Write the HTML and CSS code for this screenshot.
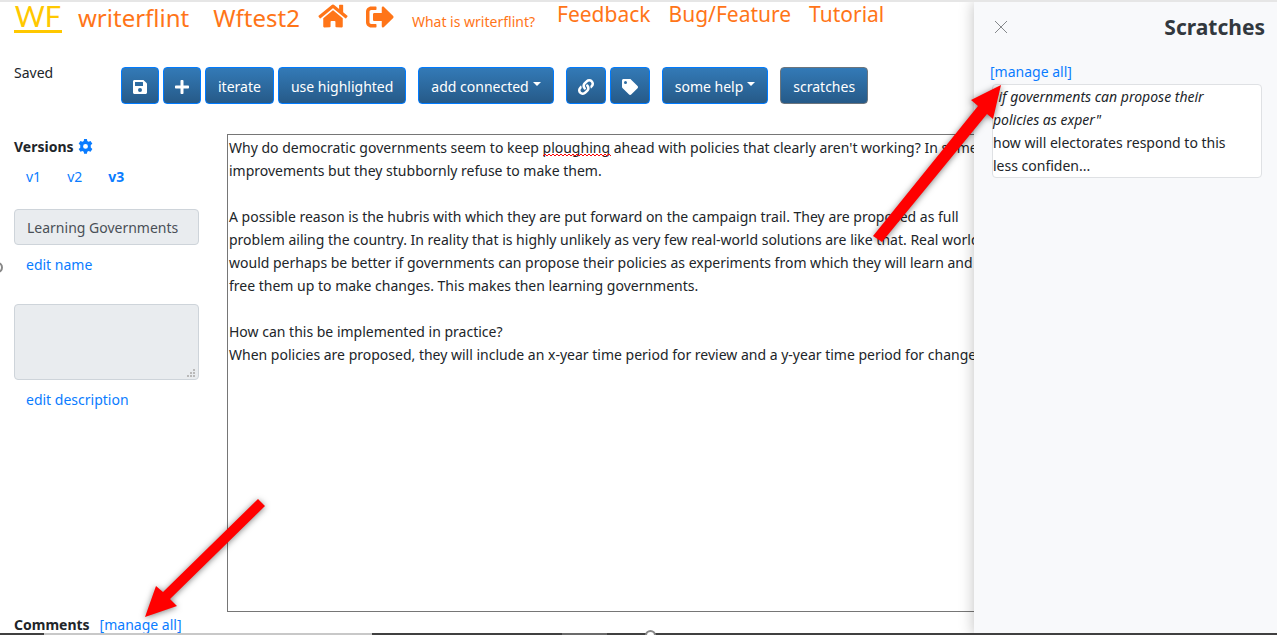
FILE: index.html
```html
<!DOCTYPE html>
<html lang="en">
<head>
<meta charset="utf-8">
<title>writerflint</title>
<link rel="stylesheet" href="styles.css">
</head>
<body>
<header class="site-header">
  <a class="logo" href="#">WF</a>
  <a class="brand" href="#">writerflint</a>
  <a class="brand project" href="#">Wftest2</a>
  <a class="nav-icon" href="#" aria-label="Home"><svg width="30" height="26" viewBox="0 0 576 512"><path d="M280 148L96 300v164c0 9 7 16 16 16l112-1c9 0 16-7 16-16v-95c0-9 7-16 16-16h64c9 0 16 7 16 16v95c0 9 7 16 16 16l112 1c9 0 16-7 16-16V300L296 148c-5-4-11-4-16 0zM572 251l-84-69V44c0-7-5-12-12-12h-56c-7 0-12 5-12 12v73l-90-74c-18-15-43-15-61 0L4 251c-5 4-6 12-1 17l25 31c4 5 12 6 17 1L280 107c5-4 11-4 15 0l235 193c5 5 13 4 17-1l26-31c4-5 4-13-1-17z"/></svg></a>
  <a class="nav-icon" href="#" aria-label="Sign out"><svg width="28" height="28" viewBox="0 0 512 512"><path d="M497 273L329 441c-15 15-41 4-41-17v-96H152c-13 0-24-11-24-24v-96c0-13 11-24 24-24h136V88c0-21 26-32 41-17l168 168c9 9 9 25 0 34zM192 436v-40c0-7-5-12-12-12H96c-18 0-32-14-32-32V160c0-18 14-32 32-32h84c7 0 12-5 12-12V76c0-7-5-12-12-12H96c-53 0-96 43-96 96v192c0 53 43 96 96 96h84c7 0 12-5 12-12z"/></svg></a>
  <a class="what" href="#">What is writerflint?</a>
  <nav class="links">
    <a href="#">Feedback</a>
    <a href="#">Bug/Feature</a>
    <a href="#">Tutorial</a>
  </nav>
</header>

<div class="toolbar">
  <span class="status">Saved</span>
  <div class="group">
    <button class="btn icon" aria-label="Save"><svg width="14" height="16" viewBox="0 0 448 512"><path d="M434 130l-84-84c-9-9-21-14-34-14H48C21 32 0 53 0 80v352c0 27 21 48 48 48h352c27 0 48-21 48-48V164c0-13-5-25-14-34zM224 416a64 64 0 1 1 0-128 64 64 0 0 1 0 128zm96-305v101c0 7-5 12-12 12H76c-7 0-12-5-12-12V108c0-7 5-12 12-12h229c9 3 15 9 15 15z"/></svg></button>
    <button class="btn icon" aria-label="Add"><svg width="14" height="16" viewBox="0 0 448 512"><path d="M416 208H272V64c0-18-14-32-32-32h-32c-18 0-32 14-32 32v144H32c-18 0-32 14-32 32v32c0 18 14 32 32 32h144v144c0 18 14 32 32 32h32c18 0 32-14 32-32V304h144c18 0 32-14 32-32v-32c0-18-14-32-32-32z"/></svg></button>
    <button class="btn">iterate</button>
    <button class="btn">use highlighted</button>
  </div>
  <button class="btn caret">add connected</button>
  <div class="group">
    <button class="btn icon" aria-label="Link"><svg width="16" height="16" viewBox="0 0 512 512"><path d="M326.600 185.400c59.700 59.800 58.900 155.700.4 214.600l-67.600 67.600c-59.300 59.300-155.700 59.300-215 0s-59.300-155.700 0-215l37.100-37.100c9.800-9.800 26.800-3.300 27.300 10.600.6 17.700 3.800 35.500 9.700 52.700 2 5.800.6 12.300-3.800 16.600l-13.100 13.100c-28 28-28.900 73.700-1.200 102 28 28.600 74.100 28.700 102.300.5l67.300-67.300c28.200-28.200 28.100-73.800 0-101.800-3.700-3.700-7.400-6.600-10.300-8.600a16 16 0 0 1-6.900-12.600c-.4-10.600 3.300-21.500 11.700-29.800l21.100-21.100c5.500-5.500 14.200-6.200 20.600-1.700a152 152 0 0 1 20.500 17.200zM467.500 44.400c-59.300-59.300-155.700-59.300-215 0l-67.500 67.600c-58.500 58.900-59.300 154.800.4 214.600a152 152 0 0 0 20.500 17.200c6.400 4.500 15.100 3.800 20.600-1.700l21.100-21.100c8.400-8.300 12.100-19.200 11.700-29.800a16 16 0 0 0-6.900-12.600c-2.900-2-6.600-4.900-10.300-8.600-28.100-28.100-28.200-73.600 0-101.800l67.200-67.300c28.200-28.200 74.300-28.100 102.300.5 27.800 28.300 26.900 73.900-1.100 102l-13.200 13.100c-4.400 4.400-5.800 10.800-3.800 16.600 5.900 17.200 9 35 9.700 52.700.5 13.900 17.500 20.400 27.300 10.600l37.100-37.100c59.300-59.300 59.300-155.700 0-215z"/></svg></button>
    <button class="btn icon" aria-label="Tag"><svg width="16" height="16" viewBox="0 0 512 512"><path d="M0 252V48C0 21 21 0 48 0h204c13 0 25 5 34 14l212 212c19 19 19 49 0 68L294 498c-19 19-49 19-68 0L14 286c-9-9-14-21-14-34zM112 64a48 48 0 1 0 0 96 48 48 0 0 0 0-96z"/></svg></button>
  </div>
  <button class="btn caret">some help</button>
  <button class="btn secondary">scratches</button>
</div>

<main class="workspace">
  <aside class="sidebar">
    <h2 class="heading">Versions <a href="#" aria-label="Version settings"><svg width="15" height="15" viewBox="0 0 16 16"><path fill-rule="evenodd" d="M6.500 0h3l.4 2.200 1.300.7 2.200-.8 1.900 2.900-1.700 1.500v2.600l1.700 1.500-1.900 2.900-2.200-.8-1.300.8-.4 2.200h-3l-.4-2.200-1.300-.8-2.200.8L.7 10.700l1.700-1.500V6.500L.7 5l1.900-2.900 2.200.8 1.300-.7zM8 5.300a2.600 2.600 0 1 0 0 5.200 2.600 2.600 0 0 0 0-5.200z"/></svg></a></h2>
    <nav class="versions">
      <a href="#">v1</a>
      <a href="#">v2</a>
      <a class="current" href="#">v3</a>
    </nav>
    <input class="field" type="text" value="Learning Governments" aria-label="Name" disabled>
    <a class="edit" href="#">edit name</a>
    <div class="resizable">
      <textarea class="field description" aria-label="Description" disabled></textarea>
      <svg class="grip" width="8" height="8" viewBox="0 0 8 8"><path d="M6 0h2v2H6zM3 3h2v2H3zM6 3h2v2H6zM0 6h2v2H0zM3 6h2v2H3zM6 6h2v2H6z"/></svg>
    </div>
    <a class="edit" href="#">edit description</a>
  </aside>
  <div class="editor">
    <textarea class="draft" aria-label="Draft" wrap="off" spellcheck="false">Why do democratic governments seem to keep ploughing ahead with policies that clearly aren't working? In some
improvements but they stubbornly refuse to make them.

A possible reason is the hubris with which they are put forward on the campaign trail. They are proposed as full
problem ailing the country. In reality that is highly unlikely as very few real-world solutions are like that. Real world
would perhaps be better if governments can propose their policies as experiments from which they will learn and
free them up to make changes. This makes then learning governments.

How can this be implemented in practice?
When policies are proposed, they will include an x-year time period for review and a y-year time period for change</textarea>
    <svg class="misspelled" width="68" height="4"><defs><pattern id="wave" width="4" height="4" patternUnits="userSpaceOnUse"><path d="M0 3L2 1L4 3"/></pattern></defs><rect width="68" height="4" fill="url(#wave)"/></svg>
  </div>
</main>

<footer class="comments">
  <h2 class="heading">Comments</h2>
  <a href="#">[manage all]</a>
</footer>

<section class="panel" aria-label="Scratches">
  <div class="panel-head">
    <button class="close" aria-label="Close"><svg width="12" height="12" viewBox="0 0 12 12"><path d="M0 0L12 12M12 0L0 12"/></svg></button>
    <h1 class="panel-title">Scratches</h1>
  </div>
  <a class="manage" href="#">[manage all]</a>
  <article class="card"><em>"if governments can propose their policies as exper"</em><p>how will electorates respond to this less confiden...</p></article>
</section>

<svg class="arrow arrow-up" width="150" height="180" viewBox="0 0 150 180"><path d="M141 15L133 49L127 44L22 172L13 166L118 36L111 30Z"/></svg>
<svg class="arrow arrow-down" width="140" height="140" viewBox="0 0 140 140"><path d="M15 129L26 98L33 104L128 11L135 18L40 111L47 118Z"/></svg>
<div class="edge"></div>
<span class="handle handle-left"></span>
<span class="handle handle-bottom"></span>
</body>
</html>
```
FILE: styles.css
```css
* { box-sizing: border-box; }
body {
  margin: 0;
  height: 100vh;
  position: relative;
  overflow: hidden;
  border-top: 2px solid #e6e6e6;
  background: #fff;
  color: #212529;
  font: 14px/23px "Noto Sans", "Open Sans", sans-serif;
}
a { color: #0a7cff; text-decoration: none; }
h1, h2, p { margin: 0; }
button, input, textarea { font: inherit; }

.site-header {
  display: flex;
  align-items: baseline;
  height: 36px;
  padding-left: 14px;
  line-height: 28px;
  white-space: nowrap;
}
.site-header a { color: #ff7518; }
.site-header .logo {
  width: 48px;
  margin-right: 16px;
  border-bottom: 3px solid #ffc800;
  color: #ffc800;
  font-family: Lato, sans-serif;
  font-size: 29px;
  line-height: 28px;
  text-align: center;
}
.brand { font-size: 24px; }
.project { margin-left: 24px; }
.nav-icon { align-self: flex-start; display: flex; margin: 1px 0 0 18px; }
.nav-icon svg { fill: currentColor; }
.what { margin-left: 18px; }
.links { display: flex; align-self: flex-start; gap: 18px; margin-left: 22px; font-size: 21px; line-height: 24px; }

.toolbar { display: flex; gap: 12px; margin-top: 29px; padding-left: 14px; }
.status { width: 95px; line-height: 12px; }
.group { display: flex; gap: 4px; }
.btn {
  display: flex;
  align-items: center;
  height: 37px;
  padding: 2px 12px 0;
  border: 1px solid #007bff;
  border-radius: 4px;
  background: linear-gradient(#337ab7, #265a88);
  color: #fff;
  white-space: nowrap;
}
.icon { padding: 2px 11px 0; }
.btn svg { fill: currentColor; }
.secondary { border-color: #6c757d; }
.caret::after {
  content: "";
  margin: -6px 0 0 4px;
  border: 4px solid transparent;
  border-top-color: #fff;
  border-bottom: 0;
}

.workspace { display: flex; gap: 28px; margin-top: 30px; padding-left: 14px; }
.sidebar { width: 185px; display: flex; flex-direction: column; }
.heading { font-size: 14px; line-height: 26px; font-weight: 700; }
.heading svg { margin-left: 1px; fill: currentColor; vertical-align: -2px; }
.versions { display: flex; gap: 26px; margin: 5px 0 21px; padding-left: 12px; }
.current { font-weight: 700; }
.field {
  width: 100%;
  height: 36px;
  padding: 4px 12px;
  border: 1px solid #ced4da;
  border-radius: 4px;
  background: #e9ecef;
  color: #495057;
}
.edit { margin: 8px 12px 28px; }
.resizable { position: relative; display: flex; }
.description { height: 76px; resize: none; }
.grip { position: absolute; right: 4px; bottom: 3px; fill: #b9b9b9; }
.editor { flex: 1; position: relative; }
.draft {
  display: block;
  width: 100%;
  height: 478px;
  padding: 1px;
  border: 1px solid #767676;
  background: #fff;
  color: inherit;
  overflow: hidden;
  resize: none;
}
.misspelled { position: absolute; top: 19px; left: 316px; pointer-events: none; }
.misspelled path { fill: none; stroke: #f00; }
.comments { display: flex; gap: 10px; padding-left: 14px; line-height: 26px; }

.panel {
  position: absolute;
  top: 0;
  right: 0;
  bottom: 0;
  width: 303px;
  padding: 11px 12px 0 16px;
  background: #f8f9fb;
  box-shadow: 0 0 14px rgba(0, 0, 0, .25);
}
.panel-head { display: flex; justify-content: space-between; align-items: center; }
.close { display: flex; padding: 5px; border: 0; background: none; }
.close svg { stroke: #85888b; fill: none; }
.panel-title { font-size: 21px; line-height: 28px; color: #32383e; }
.manage { display: block; margin-top: 19px; }
.card {
  margin: 1px 3px 0 2px;
  padding-right: 14px;
  border: 1px solid #dfe1e4;
  border-radius: 4px;
  background: #fff;
}

.arrow { position: absolute; fill: #f00; filter: drop-shadow(0 1px 3px rgba(0, 0, 0, .5)); pointer-events: none; }
.arrow-up { left: 860px; top: 68px; }
.arrow-down { left: 130px; top: 486px; }
.edge {
  position: absolute;
  left: 0;
  right: 0;
  bottom: 0;
  height: 2px;
  background: linear-gradient(90deg, #404040 44px, #c8c8c8 44px 372px, #404040 372px 562px, #6b6b6b 562px 607px, #404040 607px);
}
.handle { position: absolute; width: 11px; height: 11px; border: 2px solid #888; border-radius: 50%; background: #fff; }
.handle-left { left: -8px; top: 260px; }
.handle-bottom { left: 645px; bottom: -6px; }
```
